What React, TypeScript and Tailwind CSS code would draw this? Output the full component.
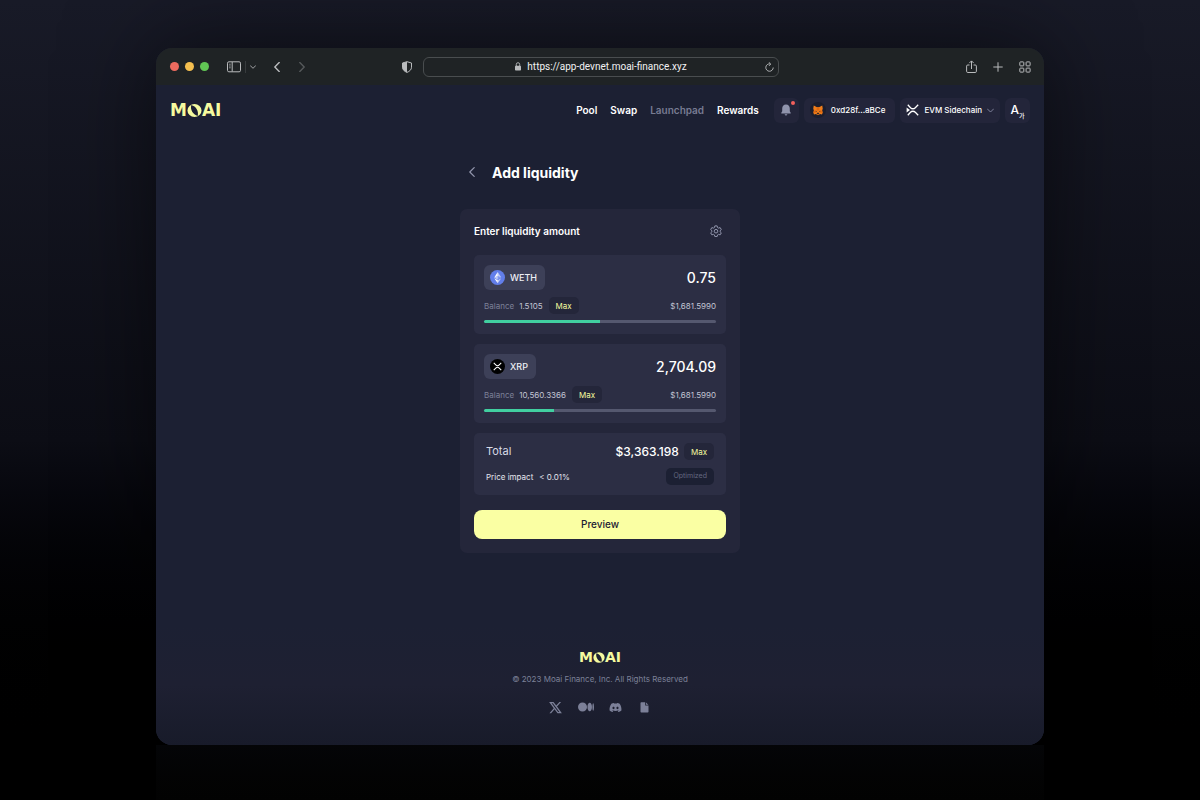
import { useState } from "react";
import { FaDiscord, FaMedium } from "react-icons/fa6";
import { RiTwitterXLine } from "react-icons/ri";

type Token = {
  symbol: string;
  amount: string;
  balance: string;
  value: string;
  percent: number;
};

const NAV = [
  { label: "Pool" },
  { label: "Swap" },
  { label: "Launchpad", disabled: true },
  { label: "Rewards" },
];

const TOKENS: Token[] = [
  {
    symbol: "WETH",
    amount: "0.75",
    balance: "1.5105",
    value: "$1,681.5990",
    percent: 50,
  },
  {
    symbol: "XRP",
    amount: "2,704.09",
    balance: "10,560.3366",
    value: "$1,681.5990",
    percent: 30,
  },
];

export default function App() {
  return (
    <div className="flex min-h-screen flex-col items-center bg-linear-to-b from-[#181a27] via-[#0c0d15] via-55% to-black to-95% pt-12 font-['Inter','Liberation_Sans',sans-serif] text-white">
      <div className="flex w-[74%] flex-col overflow-hidden rounded-2xl bg-[#1c2033] shadow-[0_0_90px_rgba(0,0,0,0.55)]">
        <BrowserBar />
        <Header />
        <main className="mx-auto w-[280px] pt-[25px]">
          <div className="flex h-6 items-center gap-[15px] pl-[7px]">
            <button aria-label="Back" className="text-[#9296ad]">
              <Chevron className="h-[10px] w-[10px] rotate-90" />
            </button>
            <h1 className="text-[14px] font-bold">Add liquidity</h1>
          </div>
          <LiquidityCard />
        </main>
        <Footer />
      </div>
      <div className="w-[74%] flex-1 bg-linear-to-b from-[#040507] to-[#020202]" />
    </div>
  );
}

function BrowserBar() {
  return (
    <div className="grid h-[37px] grid-cols-[1fr_minmax(0,356px)_1fr] items-center bg-[#1f2325] pr-[13px] pl-[14px] text-[#b9bbbd]">
      <div className="flex items-center">
        <div className="flex gap-[6px]">
          <span className="h-[9px] w-[9px] rounded-full bg-[#ec6a5e]" />
          <span className="h-[9px] w-[9px] rounded-full bg-[#f4bf4f]" />
          <span className="h-[9px] w-[9px] rounded-full bg-[#61c554]" />
        </div>
        <button aria-label="Sidebar" className="ml-[18px]">
          <svg width="14" height="12" viewBox="0 0 14 12" fill="none" stroke="currentColor">
            <rect x="0.5" y="0.8" width="13" height="10" rx="1.4" />
            <path d="M5.2 1v9.6" />
            <path d="M2 3.2h1.800M2 5h1.800M2 6.800h1.800" strokeWidth="0.7" />
          </svg>
        </button>
        <span className="ml-1 h-3 w-px bg-[#373b3d]" />
        <button aria-label="Tab groups" className="ml-1">
          <Chevron className="h-[6px] w-[6px]" strong />
        </button>
        <button aria-label="Previous page" className="ml-4">
          <Chevron className="h-[10px] w-[10px] rotate-90" strong />
        </button>
        <button aria-label="Next page" disabled className="ml-[15px] text-[#55595b]">
          <Chevron className="h-[10px] w-[10px] -rotate-90" strong />
        </button>
        <button aria-label="Privacy report" className="mr-[10px] ml-auto">
          <svg width="12" height="12" viewBox="0 0 12 12">
            <path
              d="M6 .7 10.500 2v4.200c0 2.500-2 4.200-4.500 5.200C3.500 10.400 1.500 8.700 1.500 6.200V2z"
              fill="none"
              stroke="currentColor"
            />
            <path d="M6 .7V11.400C3.500 10.400 1.500 8.700 1.500 6.200V2z" fill="currentColor" />
          </svg>
        </button>
      </div>
      <div className="flex h-5 items-center rounded-[6px] border border-[#494d4f] pr-1 pl-[14px]">
        <div className="flex flex-1 items-center justify-center gap-[6px]">
          <svg width="6" height="9" viewBox="0 0 6 9">
            <rect y="3.7" width="6" height="4.8" rx="0.8" fill="currentColor" />
            <path d="M1.300 4V2.400a1.700 1.700 0 0 1 3.400 0V4" fill="none" stroke="currentColor" strokeWidth="0.9" />
          </svg>
          <input
            aria-label="Address"
            readOnly
            value="https://app-devnet.moai-finance.xyz"
            className="field-sizing-content font-['Roboto',sans-serif] text-[10px] leading-4 text-[#f1f1f2] outline-none"
          />
        </div>
        <button aria-label="Reload">
          <svg width="9" height="10" viewBox="0 0 9 10" fill="none" stroke="currentColor" strokeWidth="0.9">
            <path d="M5 1.900A3.700 3.700 0 1 0 8.200 5.500M3.800.3 5.800 2 4 3.900" />
          </svg>
        </button>
      </div>
      <div className="flex items-center justify-end gap-4">
        <button aria-label="Share">
          <svg width="11" height="14" viewBox="0 0 11 14" fill="none" stroke="currentColor">
            <path d="M3.500 5H1.800C1 5 .6 5.400.6 6.100v5.200c0 .8.4 1.200 1.200 1.200h7.400c.8 0 1.200-.4 1.200-1.200V6.100c0-.7-.4-1.100-1.200-1.100H7.500M5.500 9V1M3.300 3.100 5.500.9l2.200 2.200" />
          </svg>
        </button>
        <button aria-label="New tab">
          <svg width="10" height="10" viewBox="0 0 10 10" stroke="currentColor">
            <path d="M5 .3v9.400M.3 5h9.400" />
          </svg>
        </button>
        <button aria-label="Tab overview">
          <svg width="12" height="12" viewBox="0 0 12 12" fill="none" stroke="currentColor">
            <rect x="0.8" y="0.9" width="4" height="4" rx="0.7" />
            <rect x="7.100" y="0.9" width="4" height="4" rx="0.7" />
            <rect x="0.8" y="7.100" width="4" height="4" rx="0.7" />
            <rect x="7.100" y="7.100" width="4" height="4" rx="0.7" />
          </svg>
        </button>
      </div>
    </div>
  );
}

function Header() {
  return (
    <header className="flex h-[50px] items-center px-[14px]">
      <a href="#" aria-label="MOAI">
        <Logo />
      </a>
      <nav className="ml-auto flex gap-[13px] text-[10px] font-semibold">
        {NAV.map((item) => (
          <a key={item.label} href="#" className={item.disabled ? "text-[#777b92]" : ""}>
            {item.label}
          </a>
        ))}
      </nav>
      <div className="ml-[15px] flex gap-[5px] text-[8px] font-medium">
        <button
          aria-label="Notifications"
          className="relative flex h-[25px] w-[25px] items-center justify-center rounded-[6px] bg-[#23253a] text-[#8f93ab]"
        >
          <svg width="10" height="12" viewBox="0 0 10 12" fill="currentColor">
            <path d="M5 .6C2.500.6 1.200 2.400 1.200 4.700v2.600L.3 8.800v.7h9.400v-.7l-.9-1.500V4.700C8.800 2.400 7.500.6 5 .6zM3.600 10.200h2.800c-.2.8-.7 1.200-1.400 1.200s-1.200-.4-1.400-1.200z" />
          </svg>
          <span className="absolute top-[3px] right-1 h-1 w-1 rounded-full bg-[#f3605c]" />
        </button>
        <button className="flex h-[25px] items-center gap-[5px] rounded-[6px] bg-[#23253a] pr-[10px] pl-[6px]">
          <span className="flex h-4 w-4 items-center justify-center rounded-full bg-[#1b1e2e]">
            <FoxIcon />
          </span>
          0xd28f...aBCe
        </button>
        <button className="flex h-[25px] items-center gap-[5px] rounded-[6px] bg-[#23253a] pr-[6px] pl-[6px]">
          <svg width="13" height="12" viewBox="0 0 13 12" fill="none" stroke="white" strokeWidth="1.300">
            <path d="M1.800.8 4.500 3.700C5.800 5.100 8 5.100 9.300 3.700L12.200.8M1.800 11.200 4.500 8.300C5.800 6.900 8 6.900 9.300 8.300l2.900 2.900" />
            <path d="M.6 3.600 4 6 .6 8.400z" fill="white" stroke="none" />
          </svg>
          EVM Sidechain
          <Chevron className="h-[7px] w-[7px] text-[#8f93ab]" />
        </button>
        <button
          aria-label="Language"
          className="flex h-[25px] w-[25px] items-center justify-center rounded-[6px] bg-[#23253a]"
        >
          <span className="text-[12px] leading-4">A</span>
          <span className="self-end pb-[3px] font-['Noto_Sans_CJK_KR',sans-serif] text-[6px] leading-[8px]">가</span>
        </button>
      </div>
    </header>
  );
}

function LiquidityCard() {
  return (
    <section className="mt-[25px] rounded-[7px] bg-[#24263a] p-[14px]">
      <div className="flex h-4 items-center justify-between pr-1">
        <h2 className="text-[10px] font-semibold">Enter liquidity amount</h2>
        <button aria-label="Settings" className="text-[#9296ad]">
          <GearIcon />
        </button>
      </div>
      <div className="mt-4 flex flex-col gap-[10px]">
        {TOKENS.map((token) => (
          <TokenInput key={token.symbol} token={token} />
        ))}
        <div className="flex flex-col gap-2 rounded-[5px] bg-[#2c2e44] px-3 py-[10px]">
          <div className="flex h-[17px] items-center">
            <span className="text-[11px] text-[#d8dae6]">Total</span>
            <span className="mr-[5px] ml-auto text-[12px] font-medium">$3,363.198</span>
            <MaxButton />
          </div>
          <div className="flex h-[17px] items-center gap-[6px] text-[8px] text-[#e4e5ee]">
            <span>Price impact</span>
            <span>&lt; 0.01%</span>
            <button
              disabled
              className="ml-auto h-[17px] rounded-[5px] bg-[#1c2033] px-[7px] text-[7px] text-[#646881]"
            >
              Optimized
            </button>
          </div>
        </div>
      </div>
      <button className="mt-[15px] h-[29px] w-full rounded-lg bg-[#faffa3] text-[10px] font-medium text-[#1c2033]">
        Preview
      </button>
    </section>
  );
}

function TokenInput({ token }: { token: Token }) {
  const [amount, setAmount] = useState(token.amount);
  const [percent, setPercent] = useState(token.percent);

  return (
    <div className="rounded-[5px] bg-[#2c2e44] px-[10px] pt-[10px] pb-[11px]">
      <div className="flex items-center justify-between">
        <button className="flex h-[25px] items-center gap-[5px] rounded-[6px] bg-[#3d4058] pr-2 pl-[6px] text-[9px] font-medium text-[#eeeff5]">
          {token.symbol === "WETH" ? <EthIcon /> : <XrpIcon />}
          {token.symbol}
        </button>
        <input
          aria-label={`${token.symbol} amount`}
          value={amount}
          onChange={(evt) => setAmount(evt.target.value)}
          className="w-[120px] text-right text-[14px] font-medium outline-none"
        />
      </div>
      <div className="mt-[7px] flex h-[17px] items-center text-[8px] text-[#c3c5d4]">
        <span className="text-[#7c8098]">Balance</span>
        <span className="mr-[6px] ml-[5px]">{token.balance}</span>
        <MaxButton onClick={() => setPercent(100)} />
        <span className="ml-auto">{token.value}</span>
      </div>
      <input
        type="range"
        aria-label={`${token.symbol} share of balance`}
        value={percent}
        onChange={(evt) => setPercent(Number(evt.target.value))}
        style={{
          backgroundImage: `linear-gradient(to right, #41cfa0 ${percent}%, #55586f ${percent}%)`,
        }}
        className="mt-[6px] block h-[3px] w-full appearance-none rounded-full [&::-webkit-slider-thumb]:h-0 [&::-webkit-slider-thumb]:w-0 [&::-webkit-slider-thumb]:appearance-none"
      />
    </div>
  );
}

function MaxButton(props: { onClick?: () => void }) {
  return (
    <button
      onClick={props.onClick}
      className="h-[17px] rounded-[5px] bg-[#24263a] px-[7px] text-[8px] text-[#f5fa9f]"
    >
      Max
    </button>
  );
}

function Footer() {
  return (
    <footer className="mt-[72px] flex h-[120px] flex-col items-center bg-linear-to-b from-[#1c2033] via-[#1e2032] to-[#181b2a] pt-[25px]">
      <Logo small />
      <p className="mt-[7px] text-[8px] leading-4 text-[#7c8098]">
        © 2023 Moai Finance, Inc. All Rights Reserved
      </p>
      <div className="mt-3 flex items-center gap-[15px] text-[#7c8098]">
        <a href="#" aria-label="X">
          <RiTwitterXLine size={15} />
        </a>
        <a href="#" aria-label="Medium">
          <FaMedium size={16} />
        </a>
        <a href="#" aria-label="Discord">
          <FaDiscord size={13} />
        </a>
        <a href="#" aria-label="Docs" className="px-[3px]">
          <svg width="9" height="11" viewBox="0 0 9 11" fill="currentColor">
            <path d="M1.300.3h3.900v3.300h3.300v6.200c0 .5-.3.8-.8.8H1.300c-.5 0-.8-.3-.8-.8V1.100c0-.5.3-.8.8-.8z" />
            <path d="M6 .4 8.400 2.800H6z" />
          </svg>
        </a>
      </div>
    </footer>
  );
}

// The O of the wordmark is a disc with a leaning slit cut out of it
function Logo({ small }: { small?: boolean }) {
  return (
    <span
      className={
        small
          ? "flex h-[14px] items-center font-['DejaVu_Sans',sans-serif] text-[14px] leading-none font-bold text-[#f5fa9f]"
          : "flex h-[18px] items-center font-['DejaVu_Sans',sans-serif] text-[17px] leading-none font-bold text-[#f5fa9f]"
      }
    >
      M
      <svg className={small ? "h-[11px] w-3" : "h-[13px] w-[15px]"} viewBox="0 0 14 12" fill="currentColor">
        <path
          fillRule="evenodd"
          d="M7 0A6.600 6 0 1 1 7 12A6.600 6 0 1 1 7 0zM4 .9C2.800 5 5.500 10 10 11.100C11.200 7 8.500 2 4 .9z"
        />
      </svg>
      AI
    </span>
  );
}

function Chevron(props: { className: string; strong?: boolean }) {
  return (
    <svg className={props.className} viewBox="0 0 10 10" fill="none" stroke="currentColor">
      <path
        d="M.6 2.800 5 7.200l4.400-4.400"
        strokeWidth={props.strong ? 1.4 : 1.2}
        strokeLinecap="round"
        strokeLinejoin="round"
      />
    </svg>
  );
}

function GearIcon() {
  return (
    <svg width="12" height="12" viewBox="0 0 24 24" fill="none" stroke="currentColor" strokeWidth="2" strokeLinejoin="round">
      <path d="M9.700 1.800h4.600l.8 3.300 1.900 1.100 3.300-1 2.300 4-2.500 2.300v1.900l2.500 2.300-2.300 4-3.300-1-1.900 1.100-.8 3.300H9.700l-.8-3.300L7 18.700l-3.300 1-2.300-4 2.500-2.300v-1.900L1.400 9.200l2.300-4 3.300 1 1.900-1.100z" />
      <circle cx="12" cy="12.400" r="3.600" />
    </svg>
  );
}

function EthIcon() {
  return (
    <svg width="15" height="15" viewBox="0 0 32 32">
      <circle cx="16" cy="16" r="16" fill="#627eea" />
      <g fill="white">
        <path d="M16.500 4v8.900l7.500 3.300z" opacity="0.6" />
        <path d="M16.500 4 9 16.200l7.500-3.300z" />
        <path d="M16.500 22v6L24 17.600z" opacity="0.6" />
        <path d="M16.500 28v-6L9 17.600z" />
        <path d="m16.500 20.600 7.500-4.400-7.500-3.300z" opacity="0.2" />
        <path d="m9 16.200 7.500 4.400v-7.700z" opacity="0.6" />
      </g>
    </svg>
  );
}

function XrpIcon() {
  return (
    <svg width="15" height="15" viewBox="0 0 32 32">
      <circle cx="16" cy="16" r="16" fill="black" />
      <path
        d="M8 8.500l4.300 4.200c2 2 5.400 2 7.400 0L24 8.500M8 23.500l4.300-4.200c2-2 5.400-2 7.400 0l4.300 4.200"
        fill="none"
        stroke="white"
        strokeWidth="2.200"
      />
    </svg>
  );
}

function FoxIcon() {
  return (
    <svg width="10" height="10" viewBox="0 0 20 20">
      <path d="M1.500 1 8 4.500h4L18.500 1l1 6-1.200 4.500 1 4-1.300 3.500-4-1-2 1.500H8L6 18l-4 1-1.300-3.500 1-4L.5 7z" fill="#f07d1a" />
      <path d="M8 4.500h4l1.200 6.500h-6.400zM1.700 11.500l4.500-.5.500 4-6 .5zM18.300 11.500l-4.500-.5-.5 4 6 .5z" fill="#e0690f" />
      <path d="M5.500 11.500 8.300 12.800l-2.500.6zM14.500 11.500l-2.800 1.300 2.500.6z" fill="#2b2a33" />
      <path d="M8 15.500h4l.4 2.500H7.600z" fill="#3b2a22" />
    </svg>
  );
}
